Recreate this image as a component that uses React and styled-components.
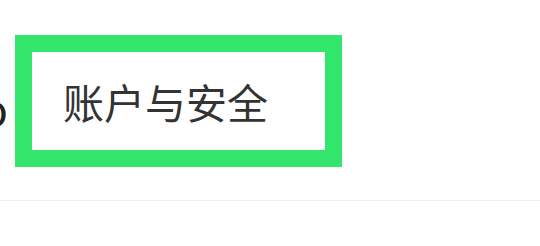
import React from "react";
import styled, { createGlobalStyle } from "styled-components";

const GlobalStyle = createGlobalStyle`
  html, body {
    margin: 0;
    padding: 0;
    background: #ffffff;
  }
  body {
    font-family: "Noto Sans CJK SC", "Noto Sans", sans-serif;
  }
`;

const Page = styled.div`
  width: 540px;
  height: 246px;
  overflow: hidden;
  background: #ffffff;
`;

const Row = styled.div`
  display: flex;
  align-items: center;
  padding-top: 35px;
`;

const Clipped = styled.div`
  width: 8px;
  overflow: hidden;
  display: flex;
  justify-content: flex-end;
  font-family: "Noto Sans", sans-serif;
  font-size: 46px;
  line-height: 1;
  color: #222;
  margin-top: 16px;

  span {
    flex-shrink: 0;
  }
`;

const Highlight = styled.div`
  margin-left: 7px;
  box-sizing: border-box;
  width: 327px;
  height: 132px;
  border: 17px solid #31e66b;
  display: flex;
  align-items: center;
  padding-left: 31px;
`;

const Label = styled.span`
  font-size: 41px;
  line-height: 1;
  color: #333333;
  letter-spacing: 0;
`;

const Divider = styled.div`
  margin-top: 33px;
  height: 1px;
  background: #f0f0f0;
`;

export default function App() {
  return (
    <Page>
      <GlobalStyle />
      <Row>
        <Clipped>
          <span>o</span>
        </Clipped>
        <Highlight>
          <Label>账户与安全</Label>
        </Highlight>
      </Row>
      <Divider />
    </Page>
  );
}
